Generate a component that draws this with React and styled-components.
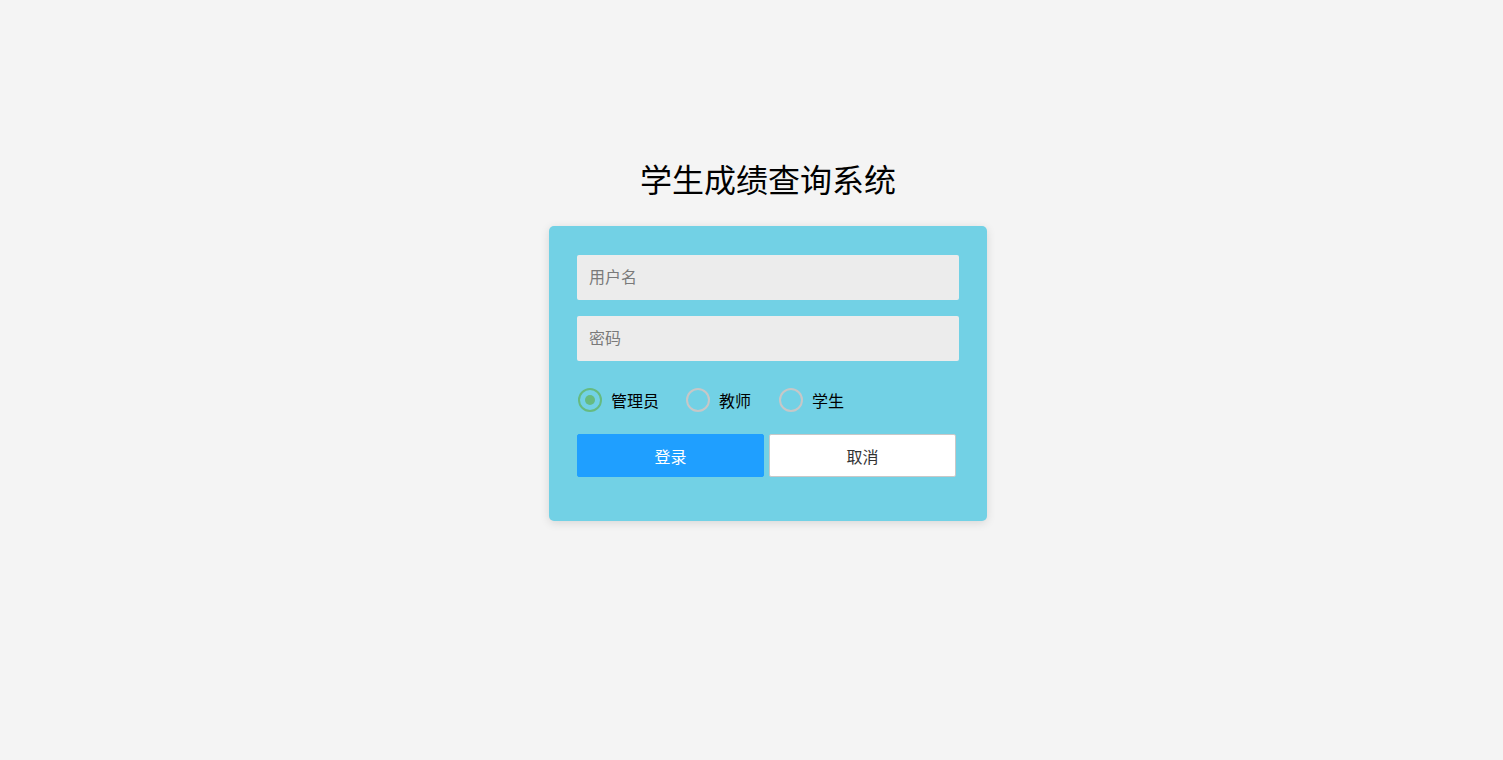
import React, { useState } from "react";
import styled, { createGlobalStyle } from "styled-components";

const GlobalStyle = createGlobalStyle`
  body {
    margin: 0;
    background: #f4f4f4;
    font-family: "Liberation Sans", "Noto Sans CJK SC", sans-serif;
  }
`;

const Page = styled.div`
  display: flex;
  flex-direction: column;
  align-items: center;
  padding-top: 161px;
  padding-left: 33px;
  min-height: 760px;
  box-sizing: border-box;
`;
const Title = styled.h1`
  margin: 0 0 25px;
  font-size: 32px;
  line-height: 40px;
  font-weight: normal;
  color: #000;
`;
const Card = styled.div`
  width: 438px;
  box-sizing: border-box;
  padding: 29px 28px 44px;
  background: #72d1e5;
  border-radius: 5px;
  box-shadow: 0 2px 10px rgba(0, 0, 0, 0.12);
`;
const Input = styled.input`
  display: block;
  width: 100%;
  height: 45px;
  box-sizing: border-box;
  margin-bottom: 16px;
  padding: 0 12px;
  border: none;
  border-radius: 2px;
  background: #ececec;
  font-family: inherit;
  font-size: 16px;
  color: #333;
  outline: none;
  &::placeholder {
    color: #7a7a7a;
  }
`;
const RadioRow = styled.div`
  display: flex;
  align-items: center;
  height: 46px;
  margin-top: 15px;
  margin-bottom: 11px;
`;
const RadioLabel = styled.label`
  display: flex;
  align-items: center;
  margin-right: ${(p) => p.$gap}px;
  font-size: 16px;
  color: #000;
  cursor: pointer;
`;
const Circle = styled.span`
  width: 20px;
  height: 20px;
  border-radius: 50%;
  border: 2px solid ${(p) => (p.$on ? "#66bb80" : "#c7c7c7")};
  margin: 0 9px 0 1px;
  display: flex;
  align-items: center;
  justify-content: center;
  &::after {
    content: "";
    width: 10px;
    height: 10px;
    border-radius: 50%;
    background: ${(p) => (p.$on ? "#66bb80" : "transparent")};
  }
`;
const Buttons = styled.div`
  display: flex;
  gap: 5px;
`;
const Button = styled.button`
  width: 187px;
  height: 43px;
  box-sizing: border-box;
  border-radius: 2px;
  font-family: inherit;
  font-size: 16px;
  cursor: pointer;
  border: 1px solid ${(p) => (p.$primary ? "#1f9fff" : "#c8c8c8")};
  background: ${(p) => (p.$primary ? "#1f9fff" : "#fff")};
  color: ${(p) => (p.$primary ? "#fff" : "#333")};
`;

const roles = [
  { name: "管理员", gap: 26 },
  { name: "教师", gap: 27 },
  { name: "学生", gap: 0 },
];

const App = () => {
  const [role, setRole] = useState("管理员");
  return (
    <Page>
      <GlobalStyle />
      <Title>学生成绩查询系统</Title>
      <Card>
        <Input placeholder="用户名" />
        <Input type="password" placeholder="密码" />
        <RadioRow>
          {roles.map((r) => (
            <RadioLabel key={r.name} $gap={r.gap} onClick={() => setRole(r.name)}>
              <Circle $on={role === r.name} />
              {r.name}
            </RadioLabel>
          ))}
        </RadioRow>
        <Buttons>
          <Button $primary>登录</Button>
          <Button>取消</Button>
        </Buttons>
      </Card>
    </Page>
  );
};

export default App;
